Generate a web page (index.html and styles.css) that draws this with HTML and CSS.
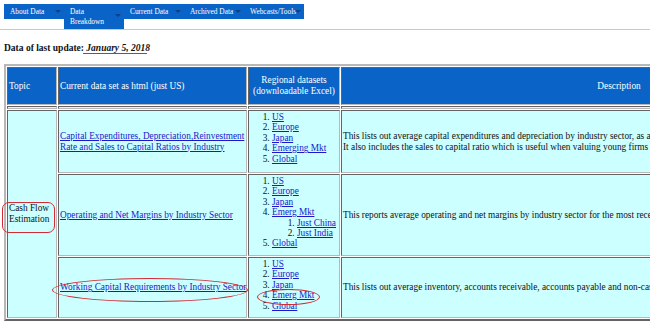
FILE: index.html
```html
<!DOCTYPE html>
<html lang="en">
<head>
    <meta charset="UTF-8">
    <title>Data Breakdown</title>
    <link rel="stylesheet" href="styles.css">
</head>
<body>

<div class="topbar">
    <ul class="nav">
        <li>About Data<span class="arrow"></span></li>
        <li class="tall">Data<br>Breakdown<span class="arrow"></span></li>
        <li>Current Data<span class="arrow"></span></li>
        <li>Archived Data<span class="arrow"></span></li>
        <li>Webcasts/Tools<span class="arrow"></span></li>
    </ul>
</div>

<p class="updated">Data of last update: <em>January 5, 2018</em></p>

<table class="data">
    <tr class="head">
        <td class="c-topic">Topic</td>
        <td class="c-current">Current data set as html (just US)</td>
        <td class="c-region center">Regional datasets<br>(downloadable Excel)</td>
        <td class="c-desc center">Description</td>
    </tr>
    <tr class="spacer">
        <td></td><td></td><td></td><td></td>
    </tr>
    <tr class="row1">
        <td rowspan="3" class="topic">Cash Flow<br>Estimation</td>
        <td class="current"><a href="#">Capital Expenditures, Depreciation,Reinvestment<br>Rate and Sales to Capital Ratios by Industry</a></td>
        <td class="region">
            <ol>
                <li><a href="#">US</a></li>
                <li><a href="#">Europe</a></li>
                <li><a href="#">Japan</a></li>
                <li><a href="#">Emerging Mkt</a></li>
                <li><a href="#">Global </a></li>
            </ol>
        </td>
        <td class="desc">This lists out average capital expenditures and depreciation by industry sector, as a percent of revenues and operating income.<br>It also includes the sales to capital ratio which is useful when valuing young firms with negative earnings.</td>
    </tr>
    <tr class="row2">
        <td class="current"><a href="#">Operating and Net Margins by Industry Sector</a></td>
        <td class="region">
            <ol>
                <li><a href="#">US</a></li>
                <li><a href="#">Europe</a></li>
                <li><a href="#">Japan</a></li>
                <li><a href="#">Emerg Mkt</a>
                    <ol>
                        <li><a href="#">Just China</a></li>
                        <li><a href="#">Just India</a></li>
                    </ol>
                </li>
                <li><a href="#">Global</a></li>
            </ol>
        </td>
        <td class="desc">This reports average operating and net margins by industry sector for the most recent year, with pre-tax and after-tax values.</td>
    </tr>
    <tr class="row3">
        <td class="current"><a href="#">Working Capital Requirements by Industry Sector</a></td>
        <td class="region">
            <ol>
                <li><a href="#">US</a></li>
                <li><a href="#">Europe</a></li>
                <li><a href="#">Japan</a></li>
                <li><a href="#">Emerg Mkt</a></li>
                <li><a href="#">Global</a></li>
            </ol>
        </td>
        <td class="desc">This lists out average inventory, accounts receivable, accounts payable and non-cash working capital, as a percent of revenues.</td>
    </tr>
</table>

<!-- red marks drawn over the screenshot -->
<span class="mark mark-date"></span>
<span class="mark mark-topic"></span>
<span class="mark mark-wc"></span>
<span class="mark mark-emerg"></span>

</body>
</html>
```

FILE: styles.css
```css
html, body {
    overflow: hidden;
}
body {
    margin: 0;
    padding: 4px;
    font-family: "Liberation Serif", "Times New Roman", Times, serif;
    font-size: 9.3px;
    color: #111;
    background: #fff;
    position: relative;
    width: 1000px;
}
.topbar {
    height: 25px;
    border-bottom: 1px solid #c8c8c8;
    margin: -4px -4px 0 -4px;
    padding: 4px 4px 0 4px;
}
.nav {
    list-style: none;
    margin: 0;
    padding: 0;
    display: flex;
    align-items: flex-start;
}
.nav li {
    background: #0a64c8;
    color: #fff;
    width: 60px;
    height: 15px;
    line-height: 10px;
    padding: 3px 0 2px 6px;
    box-sizing: border-box;
    position: relative;
    white-space: nowrap;
    font-size: 7.4px;
}
.nav li.tall {
    height: 25px;
}
.arrow {
    position: absolute;
    right: 3px;
    top: 6px;
    border-left: 3px solid transparent;
    border-right: 3px solid transparent;
    border-top: 3px solid #0b3f86;
}
.nav li.tall .arrow {
    top: 10px;
}
.updated {
    font-weight: bold;
    font-size: 9.5px;
    margin: 13px 0 11px 0;
}
.updated em {
    font-style: italic;
}
table.data {
    border: 2px outset #b8b8b8;
    border-spacing: 1px;
    width: 896px;
    table-layout: fixed;
}
table.data td {
    border: 1px inset #b8b8b8;
    background: #ccffff;
    padding: 1px;
    vertical-align: middle;
}
table.data .c-topic { width: 46px; }
table.data .c-current { width: 185px; }
table.data .c-region { width: 88px; }
table.data .head td {
    background: #0a64c8;
    color: #fff;
    height: 34px;
    line-height: 11px;
}
.center {
    text-align: center;
}
table.data .spacer td {
    height: 1px;
    padding: 0;
    font-size: 0;
    line-height: 0;
}
table.data .row1 td { height: 59px; }
table.data .row2 td { height: 78px; }
table.data .row3 td { height: 57px; }
table.data td.topic {
    line-height: 11px;
}
table.data td.current {
    white-space: nowrap;
    line-height: 10.5px;
}
table.data td.region {
    vertical-align: top;
}
a {
    color: #1a1acc;
}
ol {
    margin: 0;
    padding-left: 22px;
    line-height: 10.4px;
}
ol ol {
    padding-left: 25px;
}
.desc {
    white-space: nowrap;
    overflow: hidden;
    line-height: 11px;
}
.mark {
    position: absolute;
    border: 1.5px solid #d42a33;
    box-sizing: border-box;
}
.mark-date {
    left: 83px;
    top: 53px;
    width: 64px;
    height: 0;
    border-width: 1.5px 0 0 0;
}
.mark-topic {
    left: 2px;
    top: 202px;
    width: 53px;
    height: 31px;
    border-radius: 7px;
}
.mark-wc {
    left: 52px;
    top: 278px;
    width: 196px;
    height: 24px;
    border-radius: 50%;
}
.mark-emerg {
    left: 257px;
    top: 289px;
    width: 63px;
    height: 16px;
    border-radius: 50%;
}
```
